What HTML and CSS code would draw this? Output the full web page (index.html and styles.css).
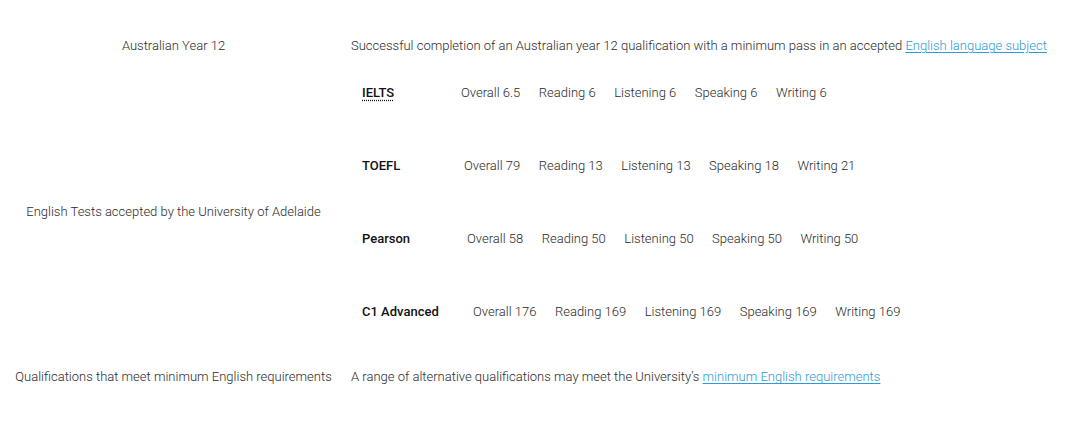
FILE: index.html
```html
<!DOCTYPE html>
<html lang="en">
<head>
<meta charset="utf-8">
<title>English requirements</title>
<link rel="stylesheet" href="styles.css">
</head>
<body>
<table class="req">
  <tbody>
    <tr class="row-short">
      <th class="label">Australian Year 12</th>
      <td class="value">Successful completion of an Australian year 12 qualification with a minimum pass in an accepted <a href="#">English language subject</a></td>
    </tr>
    <tr>
      <th class="label">English Tests accepted by the University of Adelaide</th>
      <td class="value tests">
        <div class="test test-ielts">
          <span class="name"><abbr title="International English Language Testing System">IELTS</abbr></span>
          <span>Overall 6.5</span><span>Reading 6</span><span>Listening 6</span><span>Speaking 6</span><span>Writing 6</span>
        </div>
        <div class="test test-toefl">
          <span class="name">TOEFL</span>
          <span>Overall 79</span><span>Reading 13</span><span>Listening 13</span><span>Speaking 18</span><span>Writing 21</span>
        </div>
        <div class="test test-pearson">
          <span class="name">Pearson</span>
          <span>Overall 58</span><span>Reading 50</span><span>Listening 50</span><span>Speaking 50</span><span>Writing 50</span>
        </div>
        <div class="test test-c1">
          <span class="name">C1 Advanced</span>
          <span>Overall 176</span><span>Reading 169</span><span>Listening 169</span><span>Speaking 169</span><span>Writing 169</span>
        </div>
      </td>
    </tr>
    <tr class="row-short">
      <th class="label">Qualifications that meet minimum English requirements</th>
      <td class="value">A range of alternative qualifications may meet the University’s <a href="#">minimum English requirements</a></td>
    </tr>
  </tbody>
</table>
</body>
</html>
```
FILE: styles.css
```css
html, body {
  background: #ffffff;
}
body {
  margin: 0;
  padding: 26px 8px 0 8px;
  font-family: Roboto, "Liberation Sans", Arial, sans-serif;
  font-size: 13px;
  font-weight: 300;
  line-height: 15px;
  color: #2a2a2a;
}
.req {
  border-collapse: collapse;
  table-layout: fixed;
}
.label {
  width: 317px;
  padding: 0 7px;
  font-weight: 300;
  text-align: center;
  vertical-align: middle;
  white-space: nowrap;
}
.value {
  padding: 12px 0 12px 12px;
  text-align: left;
  vertical-align: middle;
  white-space: nowrap;
}
.value a {
  color: #2b9ad6;
  text-decoration: underline;
  text-underline-offset: 2px;
}
.tests {
  padding: 0 0 0 23px;
}
.test {
  display: flex;
  gap: 18.5px;
  padding: 20px 0 38.1px 0;
  white-space: nowrap;
}
.test .name {
  font-weight: 500;
  color: #111111;
}
.test abbr {
  text-decoration: underline dotted;
  text-underline-offset: 3px;
}
.test-ielts .name { width: 80.5px; }
.test-toefl .name { width: 83.5px; }
.test-pearson .name { width: 86.5px; }
.test-c1 .name { width: 92.5px; }
```
